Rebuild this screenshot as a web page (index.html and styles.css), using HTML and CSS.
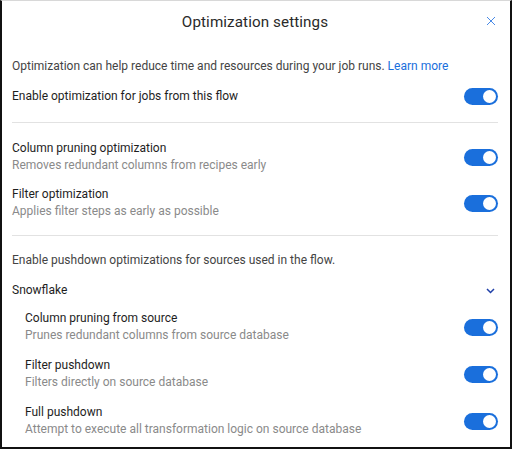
FILE: index.html
```html
<!DOCTYPE html>
<html>
<head>
<meta charset="utf-8">
<link rel="stylesheet" href="styles.css">
</head>
<body>
<div class="dialog">
  <div class="header">
    <div class="title">Optimization settings</div>
    <button class="close" aria-label="Close">
      <svg width="10" height="10" viewBox="0 0 10 10"><path d="M1 1L9 9M9 1L1 9" stroke="#4a8ae6" stroke-width="1" fill="none"/></svg>
    </button>
  </div>
  <p class="intro">Optimization can help reduce time and resources during your job runs. <a class="link" href="#">Learn more</a></p>
  <div class="row main-row">
    <div class="label">Enable optimization for jobs from this flow</div>
    <span class="toggle"><span class="knob"></span></span>
  </div>
  <hr class="divider first">
  <div class="group">
    <div class="row">
      <div class="text">
        <div class="label">Column pruning optimization</div>
        <div class="desc">Removes redundant columns from recipes early</div>
      </div>
      <span class="toggle"><span class="knob"></span></span>
    </div>
    <div class="row">
      <div class="text">
        <div class="label">Filter optimization</div>
        <div class="desc">Applies filter steps as early as possible</div>
      </div>
      <span class="toggle"><span class="knob"></span></span>
    </div>
  </div>
  <hr class="divider second">
  <p class="pushdown">Enable pushdown optimizations for sources used in the flow.</p>
  <div class="source">
    <div class="source-name">Snowflake</div>
    <svg class="chevron" width="9" height="6" viewBox="0 0 9 6"><path d="M1 1L4.5 4.5L8 1" stroke="#1f3fa8" stroke-width="1.5" fill="none"/></svg>
  </div>
  <div class="group sub">
    <div class="row">
      <div class="text">
        <div class="label">Column pruning from source</div>
        <div class="desc">Prunes redundant columns from source database</div>
      </div>
      <span class="toggle"><span class="knob"></span></span>
    </div>
    <div class="row">
      <div class="text">
        <div class="label">Filter pushdown</div>
        <div class="desc">Filters directly on source database</div>
      </div>
      <span class="toggle"><span class="knob"></span></span>
    </div>
    <div class="row">
      <div class="text">
        <div class="label">Full pushdown</div>
        <div class="desc">Attempt to execute all transformation logic on source database</div>
      </div>
      <span class="toggle"><span class="knob"></span></span>
    </div>
  </div>
</div>
</body>
</html>
```
FILE: styles.css
```css
* { box-sizing: border-box; }
html, body { margin: 0; padding: 0; background: #fff; }
body { font-family: Roboto, "Noto Sans", sans-serif; font-size: 12px; color: #222; }
.dialog {
  width: 512px;
  height: 449px;
  border-top: 1px solid #d8d8d8;
  border-left: 2px solid #111;
  border-right: 2px solid #111;
  border-bottom: 2px solid #111;
  padding: 0 12px 0 10px;
  overflow: hidden;
}
.header {
  height: 41px;
  display: flex;
  align-items: center;
  justify-content: center;
  position: relative;
}
.title { font-size: 15.2px; color: #2a2a2a; letter-spacing: 0.1px; }
.close {
  position: absolute;
  right: 1px;
  top: 14px;
  border: 0;
  background: none;
  padding: 0;
  width: 12px;
  height: 12px;
  display: flex;
  align-items: center;
  justify-content: center;
}
.intro { margin: 16px 0 0; line-height: 17px; color: #444; }
.link { color: #1a6fdc; text-decoration: none; }
.row { display: flex; align-items: center; justify-content: space-between; }
.main-row { margin-top: 13px; line-height: 17px; }
.label { color: #1e1e1e; line-height: 17px; }
.desc { color: #8a8a8a; line-height: 17px; }
.divider { border: 0; border-top: 1px solid #e2e2e2; margin: 0; }
.divider.first { margin-top: 17px; }
.divider.second { margin-top: 15px; }
.group { display: flex; flex-direction: column; gap: 12px; margin-top: 17px; }
.group.sub { padding-left: 13px; margin-top: 11px; gap: 13px; }
.toggle {
  width: 34px;
  height: 17px;
  border-radius: 9px;
  background: #1a6fdc;
  display: flex;
  align-items: center;
  justify-content: flex-end;
  padding-right: 2px;
  flex-shrink: 0;
}
.knob { width: 13px; height: 13px; border-radius: 50%; background: #fff; }
.pushdown { margin: 16px 0 0; line-height: 17px; color: #444; }
.source {
  margin-top: 13px;
  display: flex;
  align-items: center;
  justify-content: space-between;
  line-height: 17px;
  padding-right: 3px;
}
.source-name { color: #1e1e1e; }
.chevron { display: block; }
```
